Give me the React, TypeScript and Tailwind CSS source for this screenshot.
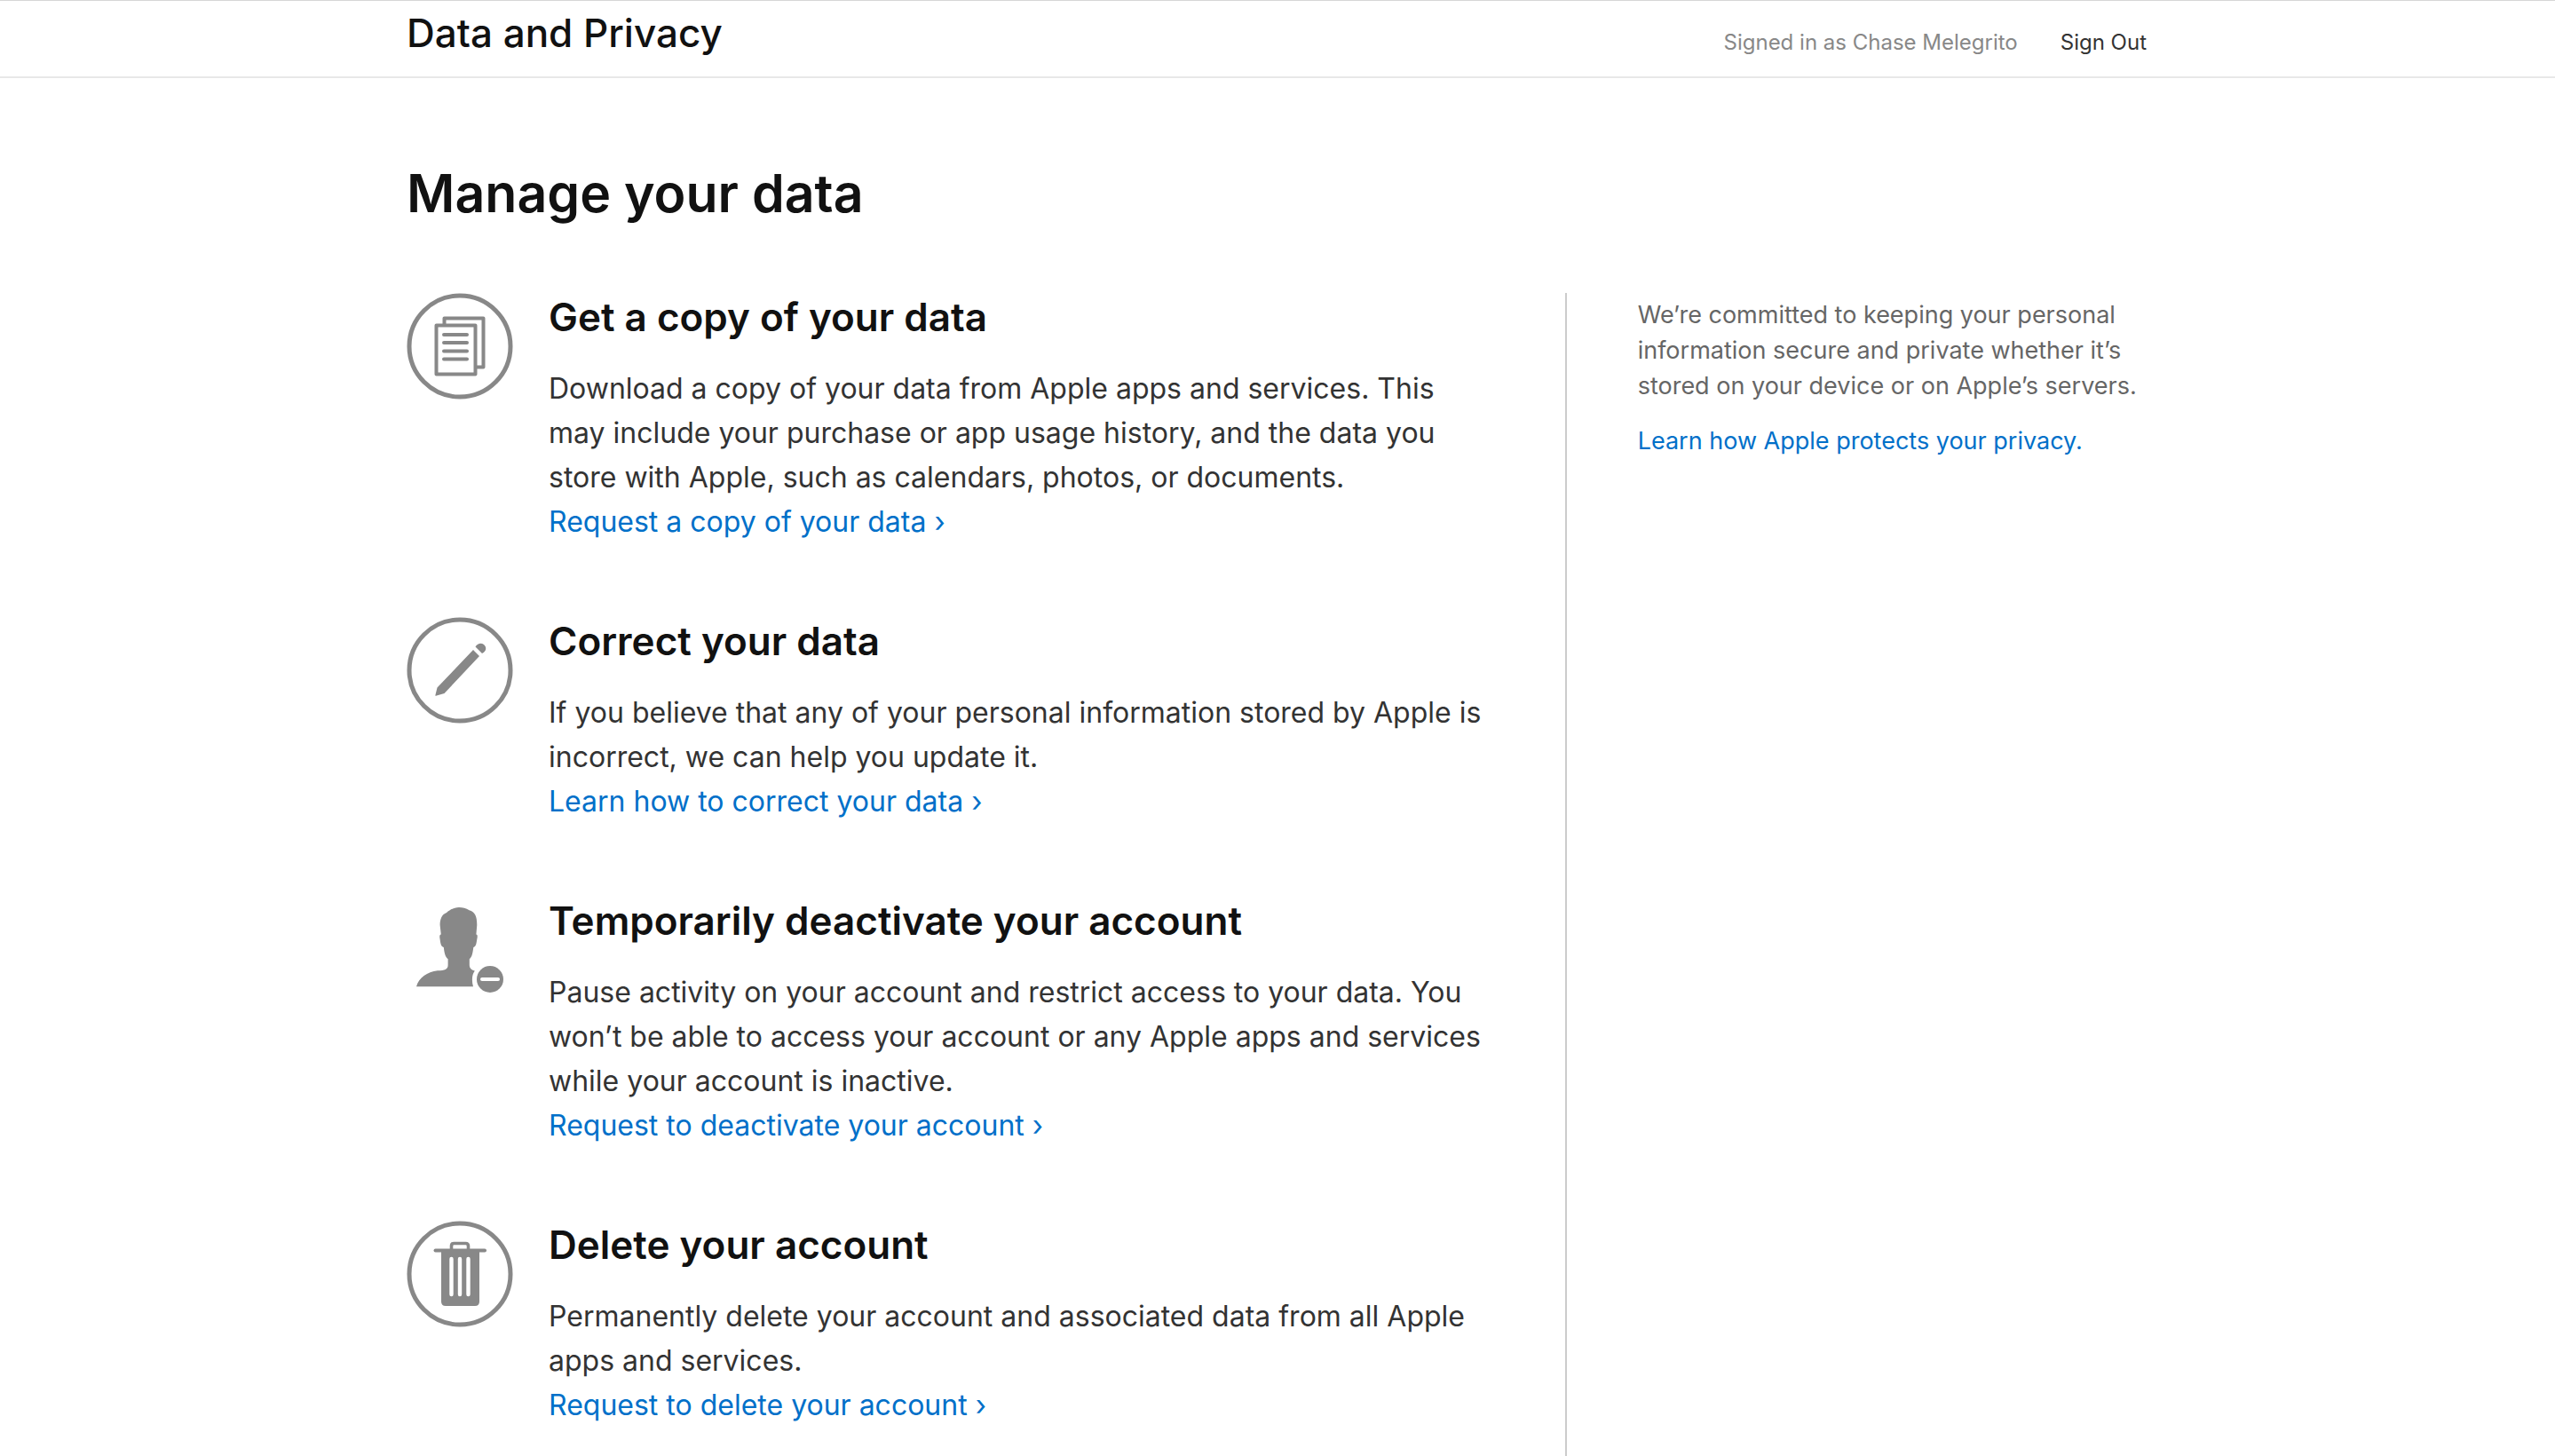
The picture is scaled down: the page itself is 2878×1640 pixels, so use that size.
import type { ReactNode } from "react";

const GRAY = "#888888";

function Ring() {
  return <circle cx="60" cy="60" r="57" fill="none" stroke={GRAY} strokeWidth="5" />;
}

function CopyIcon() {
  return (
    <svg viewBox="0 0 120 120" className="size-30 shrink-0" aria-hidden="true">
      <Ring />
      <g fill="none" stroke={GRAY} strokeWidth="4" strokeLinejoin="round">
        <rect x="33.5" y="36.5" width="44" height="55" />
        <path d="M42.5 36.5V28.5H86.5V83.5H78" />
      </g>
      <path
        d="M42 47H68M42 56H68M42 65.500H68M42 74.500H68"
        stroke={GRAY}
        strokeWidth="4"
        strokeLinecap="round"
      />
    </svg>
  );
}

function PencilIcon() {
  return (
    <svg viewBox="0 0 120 120" className="size-30 shrink-0" aria-hidden="true">
      <Ring />
      <g fill={GRAY}>
        <path d="M75 37L82 44L42.500 86L33 88.700Q32.300 88.900 32.400 88L34.500 79.500Z" />
        <path d="M77.500 33.500C80 29.500 84 28.800 87 31C90.500 34 90 38.500 85 41Z" />
      </g>
    </svg>
  );
}

function DeactivateIcon() {
  return (
    <svg viewBox="0 0 120 120" className="size-30 shrink-0" aria-hidden="true">
      <g fill={GRAY}>
        <path d="M59 12C54 12.200 49 14.500 45 18C39.500 20 37.500 26 37.600 32L38.800 42.500C37 42.500 37 45 37.600 48C38.300 52.500 38.500 56 41.800 57C42.500 63 43.500 68 46.600 70.300V77C46.600 82 43 83 35 83.300C23 85 14 91 11 101.300H75C73.300 95 73.300 88 76.800 83.500C72.500 82.500 70.800 80 70.800 77V70.300C73.800 68 74.500 63 75.300 57C78.500 56 78.600 52 79.300 48C80 45 80 42.500 78.400 42.500L79.300 32C79.300 22 77 17 70.500 15.300C67 13 63 12 59 12Z" />
        <circle cx="94" cy="93" r="15" />
      </g>
      <path d="M85 93H103" stroke="#fff" strokeWidth="4" strokeLinecap="round" />
    </svg>
  );
}

function TrashIcon() {
  return (
    <svg viewBox="0 0 120 120" className="size-30 shrink-0" aria-hidden="true">
      <Ring />
      <path
        d="M50.500 32V28.500Q50.500 25.500 53.500 25.500H66.500Q69.500 25.500 69.500 28.500V32"
        fill="none"
        stroke={GRAY}
        strokeWidth="3.6"
      />
      <path d="M32.500 33.500H88" stroke={GRAY} strokeWidth="4" strokeLinecap="round" />
      <path d="M39 33H82V91Q82 96 77 96H44Q39 96 39 91Z" fill={GRAY} />
      <path
        d="M50.500 43V83M60 43V83M69.500 43V83"
        stroke="#fff"
        strokeWidth="4.400"
        strokeLinecap="round"
      />
    </svg>
  );
}

type Item = { icon: ReactNode; title: string; body: string; link: string };

const items: Item[] = [
  {
    icon: <CopyIcon />,
    title: "Get a copy of your data",
    body: "Download a copy of your data from Apple apps and services. This may include your purchase or app usage history, and the data you store with Apple, such as calendars, photos, or documents.",
    link: "Request a copy of your data ›",
  },
  {
    icon: <PencilIcon />,
    title: "Correct your data",
    body: "If you believe that any of your personal information stored by Apple is incorrect, we can help you update it.",
    link: "Learn how to correct your data ›",
  },
  {
    icon: <DeactivateIcon />,
    title: "Temporarily deactivate your account",
    body: "Pause activity on your account and restrict access to your data. You won’t be able to access your account or any Apple apps and services while your account is inactive.",
    link: "Request to deactivate your account ›",
  },
  {
    icon: <TrashIcon />,
    title: "Delete your account",
    body: "Permanently delete your account and associated data from all Apple apps and services.",
    link: "Request to delete your account ›",
  },
];

export default function App() {
  return (
    <div className="flex h-screen flex-col overflow-hidden bg-white font-['Inter',sans-serif] text-[#333333]">
      <header className="border-t border-b-2 border-t-[#d6d6d6] border-b-[#e8e8e8] pr-0.5">
        <div className="mx-auto flex h-[85px] max-w-[1960px] items-start justify-between">
          <span className="pt-2 text-[44px] leading-[56px] font-medium text-[#111111]">
            Data and Privacy
          </span>
          <div className="flex gap-12 pt-[31px] text-[24px] leading-8">
            <span className="text-[#888888]">Signed in as Chase Melegrito</span>
            <button type="button" className="cursor-pointer">
              Sign Out
            </button>
          </div>
        </div>
      </header>

      <main className="flex min-h-0 grow justify-center pr-0.5">
        <div className="flex min-h-0 w-full max-w-[1960px] flex-col">
          <h1 className="pt-[90px] pb-[72px] text-[59px] leading-[80px] font-semibold text-[#111111]">
            Manage your data
          </h1>
          <div className="flex min-h-0 grow">
            <div className="flex w-2/3 flex-col gap-[82px] border-r-2 border-[#cccccc] pr-20">
              {items.map((item) => (
                <section key={item.title} className="flex gap-10">
                  {item.icon}
                  <div>
                    <h2 className="mb-[29px] text-[44px] leading-[54px] font-semibold text-[#111111]">
                      {item.title}
                    </h2>
                    <p className="text-[32px] leading-[50px]">{item.body}</p>
                    <a href="#" className="block text-[32px] leading-[50px] text-[#0070c9]">
                      {item.link}
                    </a>
                  </div>
                </section>
              ))}
            </div>
            <aside className="w-1/3 pt-[5px] pl-20 text-[27px] leading-10 text-[#666666]">
              <p>
                We’re committed to keeping your personal information secure and private whether
                it’s stored on your device or on Apple’s servers.
              </p>
              <a href="#" className="mt-[22px] block text-[#0070c9]">
                Learn how Apple protects your privacy.
              </a>
            </aside>
          </div>
        </div>
      </main>
    </div>
  );
}
